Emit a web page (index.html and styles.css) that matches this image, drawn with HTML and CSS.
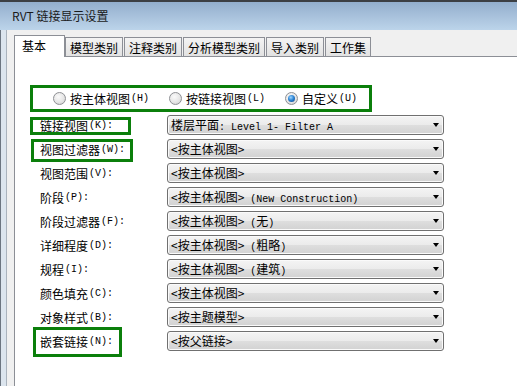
FILE: index.html
```html
<!DOCTYPE html>
<html>
<head>
	<meta charset="utf-8">
	<title>RVT 链接显示设置</title>
	<link rel="stylesheet" href="styles.css">
</head>
<body>
	<div class="window">
		<div class="titlebar">RVT 链接显示设置</div>
		<div class="body">
			<div class="frame"></div>
			<div class="content">
				<div class="tabs">
					<div class="tab active">基本</div>
					<div class="tab">模型类别</div>
					<div class="tab">注释类别</div>
					<div class="tab">分析模型类别</div>
					<div class="tab">导入类别</div>
					<div class="tab">工作集</div>
				</div>
				<div class="panel">
					<div class="radio-group">
						<label class="radio"><span class="dot"></span>按主体视图<span class="key">(H)</span></label>
						<label class="radio"><span class="dot"></span>按链接视图<span class="key">(L)</span></label>
						<label class="radio"><span class="dot checked"></span>自定义<span class="key">(U)</span></label>
					</div>
					<div class="form">
						<div class="label mark mark-view">链接视图<span class="key">(K):</span></div>
						<div class="select">楼层平面<span class="en">: Level 1- Filter A</span></div>

						<div class="label mark mark-filter">视图过滤器<span class="key">(W):</span></div>
						<div class="select">&lt;按主体视图&gt;</div>

						<div class="label">视图范围<span class="key">(V):</span></div>
						<div class="select">&lt;按主体视图&gt;</div>

						<div class="label">阶段<span class="key">(P):</span></div>
						<div class="select">&lt;按主体视图&gt;<span class="en"> (New Construction)</span></div>

						<div class="label">阶段过滤器<span class="key">(F):</span></div>
						<div class="select">&lt;按主体视图&gt;<span class="en"> (</span>无<span class="en">)</span></div>

						<div class="label">详细程度<span class="key">(D):</span></div>
						<div class="select">&lt;按主体视图&gt;<span class="en"> (</span>粗略<span class="en">)</span></div>

						<div class="label">规程<span class="key">(I):</span></div>
						<div class="select">&lt;按主体视图&gt;<span class="en"> (</span>建筑<span class="en">)</span></div>

						<div class="label">颜色填充<span class="key">(C):</span></div>
						<div class="select">&lt;按主体视图&gt;</div>

						<div class="label">对象样式<span class="key">(B):</span></div>
						<div class="select">&lt;按主题模型&gt;</div>

						<div class="label mark mark-nested">嵌套链接<span class="key">(N):</span></div>
						<div class="select">&lt;按父链接&gt;</div>
					</div>
				</div>
			</div>
		</div>
	</div>
</body>
</html>
```

FILE: styles.css
```css
body {
	margin: 0;
	padding: 0;
	background-color: #fff;
	font-family: "Noto Sans CJK SC", "Liberation Sans", sans-serif;
	font-size: 12px;
	color: #000;
}

.window {
	width: 517px;
	height: 386px;
	overflow: hidden;
	display: flex;
	flex-direction: column;
}

.titlebar {
	height: 28px;
	line-height: 28px;
	padding-left: 12px;
	border-top: 2px solid #3c3f44;
	background: linear-gradient(#93aecd, #bcd4ea);
	color: #1a1a1a;
	font-size: 12px;
}

.body {
	flex: 1;
	display: flex;
}

.frame {
	width: 5px;
	background-color: #dce5ee;
	border-left: 1px solid #6c7580;
	border-right: 1px solid #aab3bd;
}

.content {
	flex: 1;
	display: flex;
	flex-direction: column;
	padding: 5px 0 0 7px;
	background-color: #f0f0f0;
}

/* tabs */

.tabs {
	display: flex;
	align-items: flex-end;
	height: 21px;
}

.tab {
	height: 19px;
	line-height: 20px;
	padding: 0 4px;
	margin-right: 1px;
	border: 1px solid #8c8f96;
	border-bottom: none;
	box-sizing: border-box;
	background: linear-gradient(#f4f4f4, #e2e2e2);
	white-space: nowrap;
}

.tab.active {
	position: relative;
	z-index: 1;
	width: 51px;
	height: 22px;
	line-height: 20px;
	padding-left: 7px;
	margin-right: 0;
	margin-bottom: -1px;
	background: #fff;
}

.panel {
	flex: 1;
	background-color: #fff;
	border-top: 1px solid #8c8f96;
	border-left: 1px solid #8c8f96;
}

/* radio buttons */

.radio-group {
	display: flex;
	align-items: center;
	gap: 20px;
	width: 342px;
	height: 27px;
	box-sizing: border-box;
	margin: 28px 0 0 15px;
	padding-left: 20px;
	border: 3px solid #0b7f0b;
}

.radio {
	display: flex;
	align-items: center;
	white-space: nowrap;
}

.dot {
	position: relative;
	width: 13px;
	height: 13px;
	margin-right: 4px;
	box-sizing: border-box;
	border: 1px solid #8e9094;
	border-radius: 50%;
	background: radial-gradient(circle at 40% 35%, #fafafa 0%, #e6e6e6 55%, #c9c9c9 100%);
}

.dot.checked::after {
	content: "";
	position: absolute;
	left: 2px;
	top: 2px;
	width: 7px;
	height: 7px;
	border-radius: 50%;
	background: radial-gradient(circle at 40% 35%, #9fd6ff 0%, #2e86d6 45%, #0c3f7f 100%);
}

.key {
	font-family: "Liberation Mono", monospace;
	font-size: 10px;
	margin-left: 1px;
}

/* form rows */

.form {
	display: grid;
	grid-template-columns: 127px 277px;
	grid-auto-rows: 20px;
	row-gap: 4px;
	margin: 3px 0 0 25px;
}

.label {
	position: relative;
	display: flex;
	align-items: center;
	white-space: nowrap;
}

.mark::before {
	content: "";
	position: absolute;
	border: 3px solid #0b7f0b;
}

.mark-view::before {
	top: 2px;
	bottom: 0;
	left: -10px;
	right: 36px;
}

.mark-filter::before {
	top: 0;
	bottom: -3px;
	left: -9px;
	right: 34px;
}

.mark-nested::before {
	top: -4px;
	bottom: -6px;
	left: -7px;
	right: 45px;
}

.select {
	position: relative;
	height: 20px;
	line-height: 18px;
	padding-left: 3px;
	border: 1px solid #707070;
	border-radius: 3px;
	box-sizing: border-box;
	background: linear-gradient(#f4f4f4, #ebebeb 50%, #dedede 51%, #d2d2d2);
	box-shadow: inset 0 0 0 1px #fafafa;
	white-space: pre;
}

.select::after {
	content: "";
	position: absolute;
	right: 4px;
	top: 7px;
	border-left: 3.5px solid transparent;
	border-right: 3.5px solid transparent;
	border-top: 4px solid #000;
}

.en {
	font-family: "Liberation Mono", monospace;
	font-size: 10px;
}
```
